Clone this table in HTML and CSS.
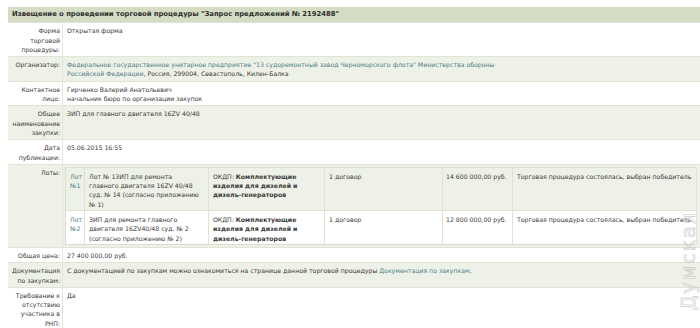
FILE: index.html
```html
<!DOCTYPE html>
<html lang="ru">
<head>
<meta charset="utf-8">
<title>Извещение</title>
<link rel="stylesheet" href="styles.css">
</head>
<body>
<table class="notice">
  <tr><th class="title" colspan="2">Извещение о проведении торговой процедуры "Запрос предложений № 2192488"</th></tr>
  <tr class="odd"><td class="label">Форма торговой процедуры:</td><td class="value">Открытая форма</td></tr>
  <tr class="even"><td class="label">Организатор:</td><td class="value"><a href="#">Федеральное государственное унитарное предприятие "13 судоремонтный завод Черноморского флота" Министерства обороны<br>Российской Федерации</a>, Россия, 299004, Севастополь, Килен-Балка</td></tr>
  <tr class="odd"><td class="label">Контактное лицо:</td><td class="value">Гирченко Валерий Анатольевич<br>начальник бюро по организации закупок</td></tr>
  <tr class="even"><td class="label">Общее наименование закупки:</td><td class="value">ЗИП для главного двигателя 16ZV 40/48</td></tr>
  <tr class="odd"><td class="label">Дата публикации:</td><td class="value">05.06.2015 16:55</td></tr>
  <tr class="even"><td class="label">Лоты:</td><td class="value lots-cell">
    <table class="lots">
      <colgroup><col class="c1"><col class="c2"><col class="c3"><col class="c4"><col class="c5"><col class="c6"></colgroup>
      <tr class="lot-a"><td><a href="#">Лот №1</a></td><td>Лот № 13ИП для ремонта<br>главного двигателя 16ZV 40/48 суд. № 14 (согласно приложению № 1)</td><td>ОКДП: <b>Комплектующие изделия для дизелей и дизель-генераторов</b></td><td>1 договор</td><td>14 600 000,00 руб.</td><td>Торговая процедура состоялась, выбран победитель</td></tr>
      <tr class="lot-b"><td><a href="#">Лот №2</a></td><td>ЗИП для ремонта главного двигателя 16ZV40/48 суд. № 2 (согласно приложению № 2)</td><td>ОКДП: <b>Комплектующие изделия для дизелей и дизель-генераторов</b></td><td>1 договор</td><td>12 800 000,00 руб.</td><td>Торговая процедура состоялась, выбран победитель</td></tr>
    </table>
  </td></tr>
  <tr class="odd"><td class="label">Общая цена:</td><td class="value">27 400 000,00 руб.</td></tr>
  <tr class="even"><td class="label">Документация по закупкам:</td><td class="value">С документацией по закупкам можно ознакомиться на странице данной торговой процедуры <a href="#">Документация по закупкам</a>.</td></tr>
  <tr class="odd"><td class="label">Требование к отсутствию участника в РНП:</td><td class="value">Да</td></tr>
</table>
<div class="watermark">Думская</div>
</body>
</html>
```

FILE: styles.css
```css
html, body {
  margin: 0;
  padding: 0;
  background: #ffffff;
  overflow: hidden;
}
body {
  padding: 7px 0 0 8px;
  font-family: "DejaVu Sans", Verdana, sans-serif;
  font-size: 6.2px;
  line-height: 9.3px;
  color: #3a3a3a;
  position: relative;
  height: 321px;
}
a {
  color: #4d7d8c;
  text-decoration: none;
}
.notice {
  width: 100%;
  border-collapse: collapse;
}
.notice > tbody > tr > td,
.notice > tbody > tr > th {
  border-bottom: 1px solid #dfe4d6;
  vertical-align: top;
}
.title {
  background: #d4dcc4;
  text-align: left;
  font-weight: bold;
  font-size: 6.8px;
  color: #2e2e2e;
  padding: 3px 4px 3px 4px;
  height: 9px;
}
.label {
  width: 54px;
  text-align: right;
  padding: 3px 2px 2px 1px;
  border-right: 1px solid #e2e7da;
}
.value {
  padding: 3px 4px 2px 4px;
}
.even {
  background: #eef1e7;
}
.odd {
  background: #ffffff;
}
.lots-cell {
  padding: 2px 3px 2px 2px;
}
.lots {
  width: 631px;
  table-layout: fixed;
  border-collapse: collapse;
  border: 1px solid #d9dfcf;
}
.lots td {
  vertical-align: top;
  padding: 4px 2px 1px 4px;
  border-right: 1px solid #dde2d4;
}
.lots .c1 { width: 19px; }
.lots .c2 { width: 124px; }
.lots .c3 { width: 116px; }
.lots .c4 { width: 118px; }
.lots .c5 { width: 70px; }
.lots .c6 { width: 184px; }
.lots td:first-child {
  padding-left: 4px;
  padding-right: 1px;
}
.lot-a {
  background: #eef1e7;
  border-bottom: 1px solid #dde2d4;
}
.lot-b {
  background: #ffffff;
}
.lots td:nth-child(5) {
  white-space: nowrap;
  padding-left: 3px;
}
.lots td:nth-child(6) {
  white-space: nowrap;
}
.watermark {
  position: absolute;
  right: 3px;
  top: 211px;
  writing-mode: vertical-rl;
  transform: rotate(180deg);
  font-family: "DejaVu Sans", sans-serif;
  font-size: 19px;
  line-height: 17px;
  color: transparent;
  -webkit-text-stroke: 0.6px #c9c9c9;
  letter-spacing: 2px;
}
```
